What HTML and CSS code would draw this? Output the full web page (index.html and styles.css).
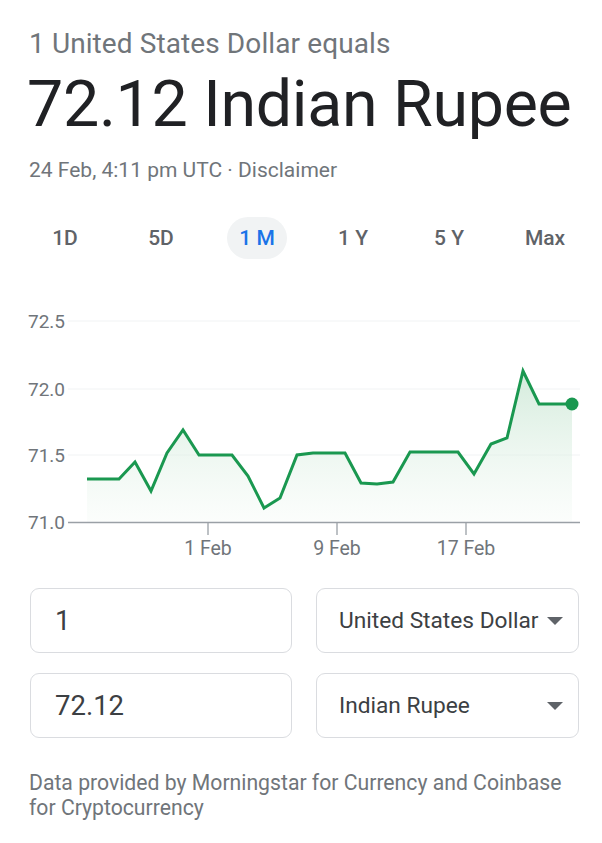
FILE: index.html
```html
<!DOCTYPE html>
<html>
<head>
<meta charset="utf-8">
<link rel="stylesheet" href="styles.css">
</head>
<body>
<div class="card">
  <div class="header">
    <div class="equals">1 United States Dollar equals</div>
    <div class="rate">72.12 Indian Rupee</div>
    <div class="stamp">24 Feb, 4:11 pm UTC · Disclaimer</div>
  </div>
  <div class="tabs">
    <div class="tab">1D</div>
    <div class="tab">5D</div>
    <div class="tab"><span class="pill">1 M</span></div>
    <div class="tab">1 Y</div>
    <div class="tab">5 Y</div>
    <div class="tab">Max</div>
  </div>
  <svg class="chart" width="602" height="270" viewBox="0 295 602 270">
    <defs>
      <linearGradient id="fill" x1="0" y1="0" x2="0" y2="1">
        <stop offset="0" stop-color="#cfe9d8" stop-opacity="0.9"/>
        <stop offset="1" stop-color="#e6f4ea" stop-opacity="0.15"/>
      </linearGradient>
    </defs>
    <g class="grid">
      <line x1="68" y1="320" x2="580" y2="320"/>
      <line x1="68" y1="388" x2="580" y2="388"/>
      <line x1="68" y1="454" x2="580" y2="454"/>
    </g>
    <g class="ylab">
      <text x="28" y="327">72.5</text>
      <text x="28" y="395">72.0</text>
      <text x="28" y="461">71.5</text>
      <text x="28" y="528">71.0</text>
    </g>
    <path class="area" d="M87,478 L119,478 L135,461 L151,490 L167,452 L183,429 L199,454 L232,454 L248,475 L264,507 L280,497 L297,454 L313,452 L345,452 L361,482 L377,483 L393,481 L410,451 L458,451 L474,473 L491,443 L507,437 L523,370 L539,403 L572,403 L572,521 L87,521 Z"/>
    <line class="base" x1="68" y1="521.5" x2="580" y2="521.5"/>
    <g class="ticks">
      <line x1="208" y1="521" x2="208" y2="534"/>
      <line x1="337" y1="521" x2="337" y2="534"/>
      <line x1="466" y1="521" x2="466" y2="534"/>
    </g>
    <g class="xlab">
      <text x="208" y="554">1 Feb</text>
      <text x="337" y="554">9 Feb</text>
      <text x="466" y="554">17 Feb</text>
    </g>
    <polyline class="line" points="87,478 119,478 135,461 151,490 167,452 183,429 199,454 232,454 248,475 264,507 280,497 297,454 313,452 345,452 361,482 377,483 393,481 410,451 458,451 474,473 491,443 507,437 523,370 539,403 572,403"/>
    <circle class="dot" cx="572" cy="403" r="6.5"/>
  </svg>
  <div class="converter">
    <div class="field"><span class="amount">1</span></div>
    <div class="field select"><span class="cur">United States Dollar</span><span class="arrow"></span></div>
    <div class="field"><span class="amount">72.12</span></div>
    <div class="field select"><span class="cur">Indian Rupee</span><span class="arrow"></span></div>
  </div>
  <div class="source">Data provided by Morningstar for Currency and Coinbase for Cryptocurrency</div>
</div>
</body>
</html>
```
FILE: styles.css
```css
html, body {
  margin: 0;
  padding: 0;
  background: #ffffff;
}
body {
  font-family: Roboto, "Noto Sans", Arial, sans-serif;
  color: #202124;
}
.card {
  width: 602px;
  height: 843px;
  background: #fff;
}
.header {
  padding: 28px 0 0 29px;
}
.equals {
  font-size: 28px;
  line-height: 32px;
  color: #70757a;
  letter-spacing: 0.1px;
}
.rate {
  font-size: 64.5px;
  line-height: 78px;
  color: #202124;
  margin: 5px 0 0 -2px;
  letter-spacing: -0.3px;
}
.stamp {
  font-size: 21px;
  line-height: 24px;
  color: #70757a;
  margin-top: 15px;
}
.tabs {
  display: flex;
  margin: 35px 0 0 17px;
}
.tab {
  width: 96px;
  height: 42px;
  display: flex;
  align-items: center;
  justify-content: center;
  font-size: 21px;
  font-weight: 500;
  color: #5f6368;
}
.pill {
  display: flex;
  align-items: center;
  justify-content: center;
  width: 60px;
  height: 42px;
  border-radius: 21px;
  background: #f1f3f4;
  color: #1a73e8;
}
.chart {
  display: block;
  margin-top: 37px;
}
.grid line {
  stroke: #f1f3f4;
  stroke-width: 1;
}
.base {
  stroke: #9aa0a6;
  stroke-width: 1.3;
}
.ticks line {
  stroke: #9aa0a6;
  stroke-width: 1.3;
}
.ylab text {
  font-family: Roboto, sans-serif;
  font-size: 19px;
  fill: #70757a;
}
.xlab text {
  font-family: Roboto, sans-serif;
  font-size: 19.5px;
  fill: #70757a;
  text-anchor: middle;
}
.area {
  fill: url(#fill);
}
.line {
  fill: none;
  stroke: #1a9850;
  stroke-width: 3;
  stroke-linejoin: miter;
}
.dot {
  fill: #1a9850;
}
.converter {
  display: grid;
  grid-template-columns: 262px 263px;
  column-gap: 24px;
  row-gap: 20px;
  margin: 22px 0 0 30px;
}
.field {
  height: 65px;
  box-sizing: border-box;
  border: 1px solid #dadce0;
  border-radius: 9px;
  display: flex;
  align-items: center;
}
.amount {
  font-size: 27.5px;
  color: #3c4043;
  padding-left: 24px;
}
.select {
  justify-content: space-between;
}
.cur {
  font-size: 22.7px;
  color: #3c4043;
  padding-left: 22px;
  white-space: nowrap;
}
.arrow {
  width: 0;
  height: 0;
  border-left: 8px solid transparent;
  border-right: 8px solid transparent;
  border-top: 8px solid #5f6368;
  margin-right: 15px;
}
.source {
  margin: 32px 30px 0 29px;
  font-size: 21.2px;
  line-height: 25px;
  color: #70757a;
}
```
